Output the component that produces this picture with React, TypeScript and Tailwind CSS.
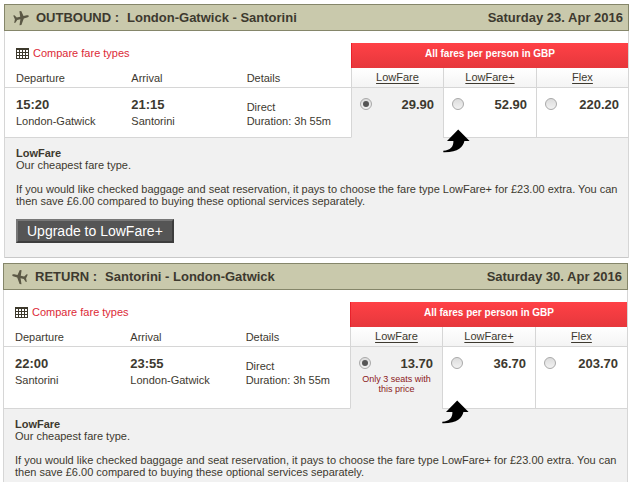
import { useState } from "react";
import clsx from "clsx";

type Fare = { name: string; price: string; note?: string };

type Flight = {
  id: string;
  label: string;
  route: string;
  date: string;
  departure: { time: string; place: string };
  arrival: { time: string; place: string };
  duration: string;
  fares: Fare[];
};

const flights: Flight[] = [
  {
    id: "outbound",
    label: "OUTBOUND :",
    route: "London-Gatwick - Santorini",
    date: "Saturday 23. Apr 2016",
    departure: { time: "15:20", place: "London-Gatwick" },
    arrival: { time: "21:15", place: "Santorini" },
    duration: "3h 55m",
    fares: [
      { name: "LowFare", price: "29.90" },
      { name: "LowFare+", price: "52.90" },
      { name: "Flex", price: "220.20" },
    ],
  },
  {
    id: "return",
    label: "RETURN :",
    route: "Santorini - London-Gatwick",
    date: "Saturday 30. Apr 2016",
    departure: { time: "22:00", place: "Santorini" },
    arrival: { time: "23:55", place: "London-Gatwick" },
    duration: "3h 55m",
    fares: [
      { name: "LowFare", price: "13.70", note: "Only 3 seats with this price" },
      { name: "LowFare+", price: "36.70" },
      { name: "Flex", price: "203.70" },
    ],
  },
];

const PlaneIcon = ({ flipped }: { flipped: boolean }) => (
  <svg
    className={clsx("h-4 w-4 shrink-0", flipped && "-scale-x-100")}
    viewBox="0 0 16 16"
    fill="#5b5845"
    aria-hidden="true"
  >
    <path d="M0.2 5.6 1.4 5.3 3.8 7.4 7.2 6.7 6.4 1.3 8.2 1.1 10.5 6 13.8 5.2C14.9 5 15.8 5.3 15.8 6 15.8 6.7 15.1 7.2 14.1 7.5L10.8 8.4 8.4 15 6.5 15.2 7.4 9.3 4.2 9.9 2.4 12.7 1.2 12.9 1.9 9.2Z" />
  </svg>
);

const GridIcon = () => (
  <svg
    className="h-[11px] w-[13px] shrink-0"
    viewBox="0 0 13 11"
    shapeRendering="crispEdges"
    aria-hidden="true"
  >
    <rect width="13" height="11" fill="#3d392c" />
    {[2, 5, 8].map((y) =>
      [1, 4, 7, 10].map((x) => (
        <rect key={`${x}-${y}`} x={x} y={y} width="2" height="2" fill="#fff" />
      ))
    )}
  </svg>
);

const ArrowIcon = () => (
  <svg
    className="pointer-events-none absolute -bottom-4 -left-px h-6 w-[27px]"
    viewBox="0 0 27 24"
    aria-hidden="true"
  >
    <path d="M15.2 0.6 26.6 11.9H21.4C20.4 17.5 15 23.6 0.3 23.2V21.8C7.5 21 10.6 17.5 10.4 11.9H4Z" />
  </svg>
);

const Stop = ({ time, place }: { time: string; place: string }) => (
  <td className="border-b border-[#d6d6d6] pt-[9px] pb-2 pl-[11px] align-top leading-4">
    <div className="text-[13px] font-bold">{time}</div>
    <div>{place}</div>
  </td>
);

const FlightCard = ({ flight }: { flight: Flight }) => {
  const [selected, setSelected] = useState("LowFare");
  const isReturn = flight.id === "return";

  return (
    <section>
      <header className="flex h-[27px] items-center border border-[#85866a] bg-[#c9c9ac] pr-[5px] pl-2 text-[13px] font-bold">
        <PlaneIcon flipped={isReturn} />
        <h2 className="ml-[7px] flex grow gap-2">
          <span>{flight.label}</span>
          <span>{flight.route}</span>
        </h2>
        <span>{flight.date}</span>
      </header>

      <div className="border-x border-[#d6d6d6] pt-3">
        <table className="w-full table-fixed border-separate border-spacing-0 text-left">
          <colgroup>
            <col />
            <col />
            <col />
            <col className="w-[92px]" />
            <col className="w-[93px]" />
            <col className="w-[92px]" />
          </colgroup>
          <thead>
            <tr className="h-[25px]">
              <td colSpan={3} className="pb-[5px] pl-[11px]">
                <a href="#fare-types" className="flex items-center gap-1 text-[#dc2a37]">
                  <GridIcon />
                  Compare fare types
                </a>
              </td>
              <th
                colSpan={3}
                className="border-l border-[#e8212c] bg-linear-to-b from-[#ff4146] to-[#e6373c] pb-[3px] text-center text-[10px] font-bold text-white"
              >
                All fares per person in GBP
              </th>
            </tr>
            <tr className="h-5">
              {["Departure", "Arrival", "Details"].map((title) => (
                <th key={title} className="border-b border-[#d6d6d6] pl-[11px] font-normal">
                  {title}
                </th>
              ))}
              {flight.fares.map((fare) => (
                <th
                  key={fare.name}
                  className="border-b border-l border-[#d6d6d6] bg-linear-to-b from-white to-[#f4f4f4] pb-px text-center font-normal"
                >
                  <a href="#fare-types" className="underline underline-offset-2">
                    {fare.name}
                  </a>
                </th>
              ))}
            </tr>
          </thead>
          <tbody>
            <tr>
              <Stop {...flight.departure} />
              <Stop {...flight.arrival} />
              <td className="border-b border-[#d6d6d6] pt-3 pl-[11px] align-top leading-[14px]">
                <div>Direct</div>
                <div>Duration: {flight.duration}</div>
              </td>
              {flight.fares.map((fare) => {
                const checked = fare.name === selected;
                return (
                  <td
                    key={fare.name}
                    className={clsx(
                      "relative border-b border-l border-l-[#d6d6d6] pt-[9px] pb-[14px] align-top",
                      checked ? "border-b-[#f1f1f1] bg-[#f1f1f1]" : "border-b-[#d6d6d6]"
                    )}
                  >
                    <label className="flex h-4 justify-between pr-[9px] pl-2 text-[13px] leading-4 font-bold">
                      <input
                        type="radio"
                        name={flight.id}
                        checked={checked}
                        onChange={() => setSelected(fare.name)}
                        className="mt-px grid h-3 w-3 appearance-none place-items-center rounded-full border border-[#a9a9a9] bg-linear-to-b from-[#dcdcdc] to-[#f2f2f2] before:h-1.5 before:w-1.5 before:rounded-full checked:before:bg-[#555] checked:before:content-['']"
                      />
                      {fare.price}
                    </label>
                    {fare.note && (
                      <p className="mt-0.5 px-2 text-center text-[9px] leading-[10px] text-[#8c1a1a]">
                        {fare.note}
                      </p>
                    )}
                    {fare.name === "LowFare+" && <ArrowIcon />}
                  </td>
                );
              })}
            </tr>
          </tbody>
        </table>

        <div
          className={clsx(
            "bg-[#f1f1f1] pt-[9px] pr-1 pl-[11px]",
            isReturn ? "pb-1" : "border-b border-[#c8c8c8] pb-[14px]"
          )}
        >
          <h3 className="font-bold">LowFare</h3>
          <p>Our cheapest fare type.</p>
          <p className="mt-3">
            If you would like checked baggage and seat reservation, it pays to choose the fare type
            LowFare+ for £23.00 extra. You can then save £6.00 compared to buying these optional
            services separately.
          </p>
          {!isReturn && (
            <button
              type="button"
              className="mt-3 block h-6 border-2 border-t-[#777] border-r-[#3d3d3d] border-b-[#3d3d3d] border-l-[#777] bg-[#555] px-[9px] text-[14px] leading-5 text-white"
            >
              Upgrade to LowFare+
            </button>
          )}
        </div>
      </div>
    </section>
  );
};

export default function App() {
  return (
    <main className="bg-white pt-1 font-['Liberation_Sans',Arial,sans-serif] text-[11px] leading-3 text-[#3d392f]">
      <div className="mx-1">
        <FlightCard flight={flights[0]} />
      </div>
      <div className="mt-[5px] mr-[5px] ml-[3px]">
        <FlightCard flight={flights[1]} />
      </div>
    </main>
  );
}
